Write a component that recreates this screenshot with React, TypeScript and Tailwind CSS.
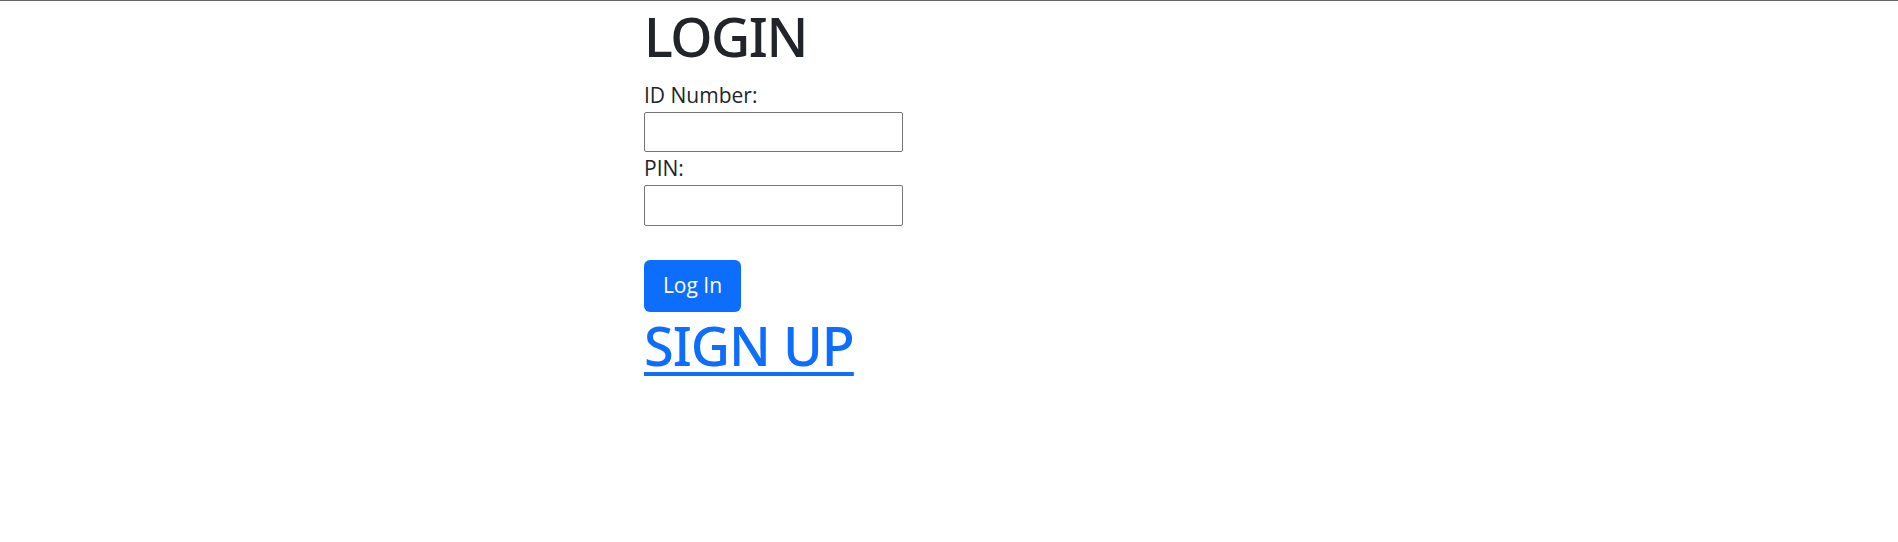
export default function App() {
  return (
    <div className="min-h-[542px] w-full border-t border-[#666666] bg-white font-['Open_Sans',sans-serif] text-[#212529]">
      <div className="ml-[644px] flex flex-col items-start">
        <h1 className="mt-[-2px] mb-[6px] font-['Noto_Sans',sans-serif] text-[54px] font-medium leading-[74px] tracking-[-1.5px]">
          LOGIN
        </h1>
        <form className="flex flex-col items-start" onSubmit={(e) => e.preventDefault()}>
          <label htmlFor="id" className="text-[21px] leading-[33px]">
            ID Number:
          </label>
          <input
            id="id"
            type="text"
            className="h-[40px] w-[259px] rounded-[2px] border border-[#767676] px-1"
          />
          <label htmlFor="pin" className="text-[21px] leading-[33px]">
            PIN:
          </label>
          <input
            id="pin"
            type="password"
            className="h-[41px] w-[259px] rounded-[2px] border border-[#767676] px-1"
          />
          <button
            type="submit"
            className="mt-[34px] h-[52px] w-[97px] rounded-[6px] bg-[#0d6efd] text-[21px] text-white"
          >
            Log In
          </button>
        </form>
        <a
          href="#"
          className="mt-[1px] font-['Noto_Sans',sans-serif] text-[54px] font-medium leading-[64px] tracking-[-1px] text-[#0d6efd] underline decoration-[4px] underline-offset-[6px]"
        >
          SIGN UP
        </a>
      </div>
    </div>
  );
}
